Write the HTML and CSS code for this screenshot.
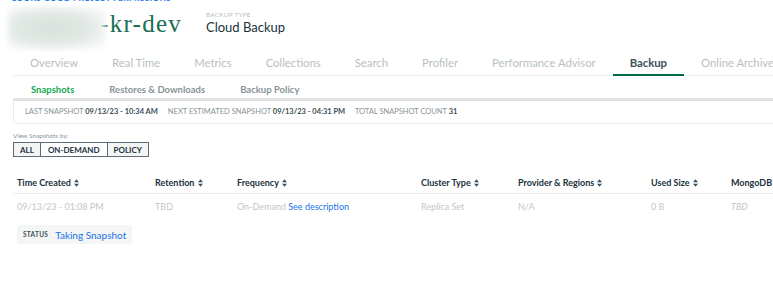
FILE: index.html
```html
<!DOCTYPE html>
<html lang="en">
<head>
  <meta charset="UTF-8" />
  <title>Backup - Snapshots</title>
  <link rel="stylesheet" href="styles.css">
</head>
<body>

<div class="page">

  <!-- Cluster header -->
  <a class="crumb" href="#">LOOKS GOOD PROJECT PERMISSIONS</a>
  <div class="cluster-head">
    <div class="cluster-name">
      <span class="blurred"></span>
      <span class="name-tail">-kr-dev</span>
    </div>
    <div class="backup-type">
      <div class="label">BACKUP TYPE</div>
      <div class="value">Cloud Backup</div>
    </div>
  </div>

  <!-- Main tabs -->
  <div class="tabs">
    <span class="tab">Overview</span>
    <span class="tab">Real Time</span>
    <span class="tab">Metrics</span>
    <span class="tab">Collections</span>
    <span class="tab">Search</span>
    <span class="tab">Profiler</span>
    <span class="tab">Performance Advisor</span>
    <span class="tab active">Backup</span>
    <span class="tab">Online Archive</span>
  </div>

  <!-- Sub tabs -->
  <div class="subtabs">
    <span class="subtab active">Snapshots</span>
    <span class="subtab">Restores &amp; Downloads</span>
    <span class="subtab">Backup Policy</span>
  </div>

  <div class="summary">
    <span class="key">LAST SNAPSHOT</span> <b>09/13/23 - 10:34 AM</b>
    <span class="key">NEXT ESTIMATED SNAPSHOT</span> <b>09/13/23 - 04:31 PM</b>
    <span class="key">TOTAL SNAPSHOT COUNT</span> <b>31</b>
  </div>

  <div class="view-by">View Snapshots by:</div>
  <div class="btn-group">
    <button class="seg">ALL</button>
    <button class="seg on">ON-DEMAND</button>
    <button class="seg">POLICY</button>
  </div>

  <!-- Snapshot table -->
  <table class="snapshots">
    <colgroup>
      <col style="width:138px">
      <col style="width:82px">
      <col style="width:184px">
      <col style="width:97px">
      <col style="width:133px">
      <col style="width:80px">
      <col style="width:90px">
    </colgroup>
    <thead>
      <tr>
        <th>Time Created <svg class="sort" viewBox="0 0 6 9"><path d="M3 0L6 3.6H0Z M3 9L6 5.4H0Z"/></svg></th>
        <th>Retention <svg class="sort" viewBox="0 0 6 9"><path d="M3 0L6 3.6H0Z M3 9L6 5.4H0Z"/></svg></th>
        <th>Frequency <svg class="sort" viewBox="0 0 6 9"><path d="M3 0L6 3.6H0Z M3 9L6 5.4H0Z"/></svg></th>
        <th>Cluster Type <svg class="sort" viewBox="0 0 6 9"><path d="M3 0L6 3.6H0Z M3 9L6 5.4H0Z"/></svg></th>
        <th>Provider &amp; Regions <svg class="sort" viewBox="0 0 6 9"><path d="M3 0L6 3.6H0Z M3 9L6 5.4H0Z"/></svg></th>
        <th>Used Size <svg class="sort" viewBox="0 0 6 9"><path d="M3 0L6 3.6H0Z M3 9L6 5.4H0Z"/></svg></th>
        <th>MongoDB Version</th>
      </tr>
    </thead>
    <tbody>
      <tr>
        <td>09/13/23 - 01:08 PM</td>
        <td>TBD</td>
        <td>On-Demand <a href="#">See description</a></td>
        <td>Replica Set</td>
        <td>N/A</td>
        <td>0 B</td>
        <td><i>TBD</i></td>
      </tr>
    </tbody>
  </table>

  <div class="status">
    <span class="status-key">STATUS</span>
    <span class="status-val">Taking Snapshot</span>
  </div>

</div>

</body>
</html>
```

FILE: styles.css
```css
body {
  margin: 0;
  background: #fff;
  font-family: Lato, "Open Sans", sans-serif;
  color: #21313c;
  overflow: hidden;
}

.page {
  width: 900px;
  padding: 0 0 0 13px;
}

.crumb {
  display: block;
  margin: -7px 0 0 -1px;
  height: 10px;
  line-height: 10px;
  font-size: 8px;
  font-weight: 700;
  color: #1a73e8;
  text-decoration: none;
  letter-spacing: 0.5px;
}

.cluster-head {
  display: flex;
  align-items: flex-start;
  height: 50px;
}

.cluster-name {
  display: flex;
  align-items: center;
  width: 198px;
  margin: 4px 0 0 -5px;
}

.blurred {
  width: 97px;
  height: 42px;
  background: radial-gradient(ellipse at 45% 50%, #d7e1dc 0%, #e2e9e5 50%, #f6f8f7 85%, #fff 100%);
  filter: blur(3px);
}

.name-tail {
  margin: -8px 0 0 -5px;
  font-family: "Liberation Serif", serif;
  font-size: 25px;
  letter-spacing: 1.3px;
  color: #1a6e52;
}

.backup-type .label {
  margin-top: 8px;
  font-size: 6.5px;
  color: #b8c0c2;
  letter-spacing: 0.2px;
}

.backup-type .value {
  margin-top: 1px;
  font-size: 13px;
  color: #21313c;
}

.tabs {
  display: flex;
  border-bottom: 1px solid #e7eeec;
  height: 24px;
  margin-top: -2px;
}

.tab {
  padding: 5px 17px 0;
  font-size: 11.3px;
  color: #b8c0c2;
  white-space: nowrap;
}

.tab.active {
  color: #3d4f58;
  font-weight: 700;
  border-bottom: 2px solid #00684a;
  margin-bottom: -1px;
}

.subtabs {
  display: flex;
  height: 22px;
  border-bottom: 3px solid #dfe4e3;
}

.subtab {
  padding: 8px 17px 0 18px;
  font-size: 9.5px;
  font-weight: 700;
  color: #889397;
  white-space: nowrap;
}

.subtab.active {
  color: #13aa52;
}

.summary {
  height: 22px;
  line-height: 21px;
  padding-left: 11px;
  border: 1px solid #e7eeec;
  border-top: none;
  border-bottom-left-radius: 5px;
  font-size: 7.5px;
  color: #889397;
  white-space: nowrap;
}

.summary b {
  color: #3d4f58;
  margin-right: 8px;
}

.view-by {
  margin-top: 8px;
  font-size: 6.5px;
  color: #889397;
}

.btn-group {
  display: flex;
  margin-top: 3px;
}

.seg {
  height: 15px;
  padding: 0 6px;
  border: 1px solid #5c6c75;
  background: #f3f5f5;
  font-family: Lato, sans-serif;
  font-size: 8px;
  font-weight: 700;
  color: #21313c;
  margin-left: -1px;
}

.seg:first-child {
  margin-left: 0;
}

.seg.on {
  background: #fff;
  padding: 0 7px;
}

.snapshots {
  margin-top: 20px;
  border-collapse: collapse;
  table-layout: fixed;
  width: 804px;
}

.snapshots th {
  text-align: left;
  padding: 0 4px 5px;
  font-size: 9px;
  font-weight: 700;
  color: #21313c;
  border-bottom: 1px solid #e7eeec;
  white-space: nowrap;
}

.sort {
  width: 5px;
  height: 8px;
  margin-left: 1px;
  vertical-align: -1px;
  fill: #3d4f58;
}

.snapshots td {
  padding: 7px 4px 6px;
  font-size: 9px;
  color: #c1c7c9;
  white-space: nowrap;
}

.snapshots td a {
  color: #1a73e8;
  text-decoration: none;
}

.status {
  display: inline-flex;
  align-items: center;
  gap: 7px;
  margin: 7px 0 0 4px;
  height: 19px;
  padding: 0 6px;
  background: #f4f6f6;
}

.status-key {
  font-size: 6.5px;
  font-weight: 700;
  color: #3d4f58;
  letter-spacing: 0.3px;
}

.status-val {
  font-size: 10px;
  color: #1a73e8;
}
```
